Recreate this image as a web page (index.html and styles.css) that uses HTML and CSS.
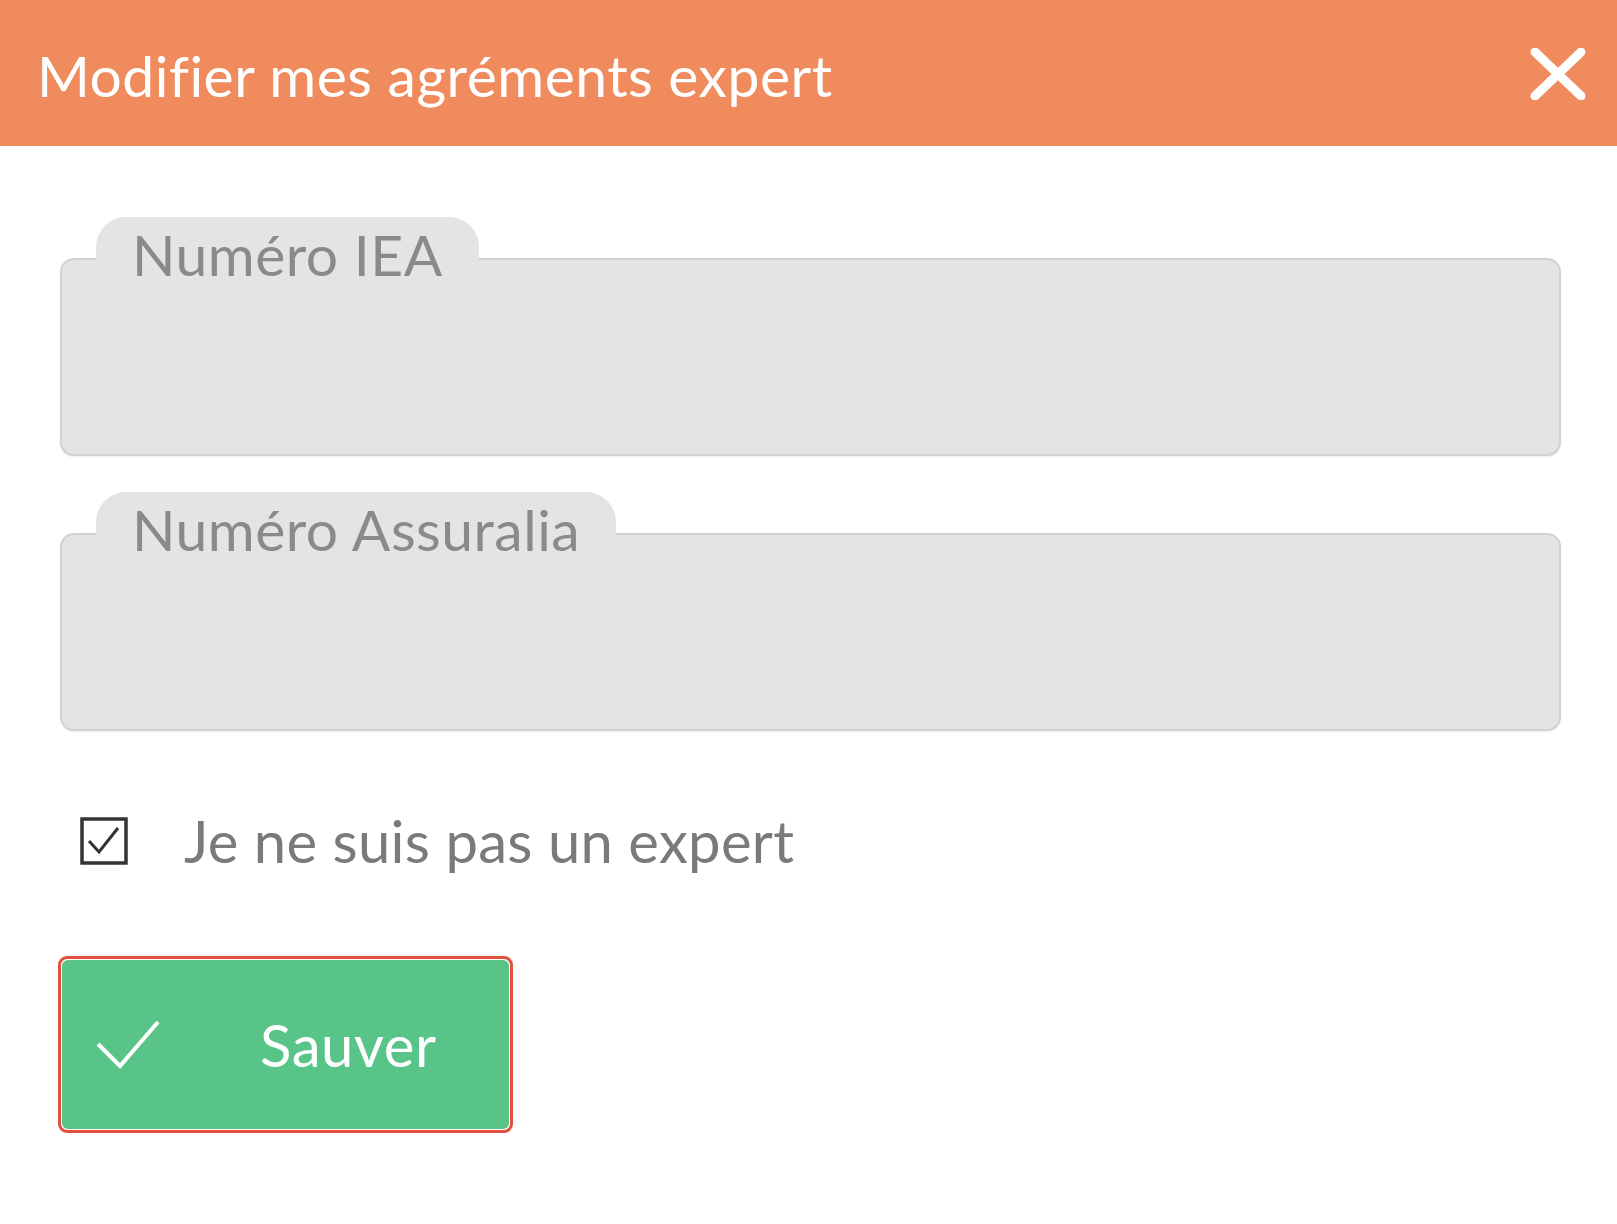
FILE: index.html
```html
<!DOCTYPE html>
<html lang="fr">
<head>
<meta charset="utf-8">
<title>Modifier mes agréments expert</title>
<link rel="stylesheet" href="styles.css">
</head>
<body>
<div class="dialog">
  <header class="dialog-header">
    <h1 class="dialog-title">Modifier mes agréments expert</h1>
    <button class="close-btn" aria-label="Fermer">
      <svg width="56" height="52" viewBox="0 0 56 52"><path d="M5 4 L51 48 M51 4 L5 48" stroke="#fff" stroke-width="9" stroke-linecap="round" fill="none"/></svg>
    </button>
  </header>
  <main class="dialog-body">
    <div class="field">
      <div class="field-tab"><span class="field-label">Numéro IEA</span></div>
      <div class="field-box"></div>
    </div>
    <div class="field field-second">
      <div class="field-tab"><span class="field-label">Numéro Assuralia</span></div>
      <div class="field-box"></div>
    </div>
    <label class="check-row">
      <span class="check-box">
        <svg width="48" height="48" viewBox="0 0 48 48"><rect x="2" y="2" width="44" height="44" fill="#fff" stroke="#333" stroke-width="3.5"/><path d="M9 24 L19 35 L38 11" stroke="#333" stroke-width="3" fill="none"/></svg>
      </span>
      <span class="check-label">Je ne suis pas un expert</span>
    </label>
    <div class="btn-ring">
      <button class="save-btn">
        <svg class="save-icon" width="64" height="50" viewBox="0 0 64 50"><path d="M2 24 L24 46 L62 2" stroke="#fff" stroke-width="4" fill="none"/></svg>
        <span class="save-text">Sauver</span>
      </button>
    </div>
  </main>
</div>
</body>
</html>
```
FILE: styles.css
```css
html, body {
  margin: 0;
  padding: 0;
  background: #fff;
}
body {
  font-family: Lato, "Open Sans", "Liberation Sans", sans-serif;
}
.dialog-header {
  height: 146px;
  background: #f08b5e;
  display: flex;
  align-items: center;
  justify-content: space-between;
  padding: 0 31px 0 37px;
  box-sizing: border-box;
}
.dialog-title {
  margin: 0;
  font-size: 57px;
  font-weight: 400;
  color: #fff;
  letter-spacing: 0.5px;
  line-height: 1;
  padding-top: 4px;
}
.close-btn {
  border: 0;
  background: none;
  padding: 0;
  display: flex;
  margin-top: 2px;
}
.dialog-body {
  padding: 71px 56px 0 60px;
  display: flex;
  flex-direction: column;
  align-items: flex-start;
}
.field {
  width: 100%;
  display: flex;
  flex-direction: column;
  align-items: flex-start;
}
.field-second {
  margin-top: 36px;
}
.field-tab {
  position: relative;
  z-index: 1;
  margin-left: 36px;
  height: 43px;
  padding: 0 36px 0 36px;
  background: #e4e4e4;
  border-radius: 30px 30px 0 0;
}
.field-label {
  display: block;
  font-size: 57px;
  line-height: 1;
  padding-top: 9px;
  color: #8a8a8a;
  letter-spacing: 0.5px;
  white-space: nowrap;
}
.field-box {
  width: 100%;
  height: 198px;
  margin-top: -2px;
  box-sizing: border-box;
  background: #e4e4e4;
  border: 2px solid #d2d2d2;
  border-radius: 14px;
  box-shadow: 0 1px 2px rgba(0,0,0,0.08);
}
.check-row {
  margin-top: 81px;
  margin-left: 20px;
  display: flex;
  align-items: center;
  gap: 56px;
}
.check-box {
  display: flex;
}
.check-label {
  font-size: 58px;
  color: #7a7a7a;
  line-height: 1;
  letter-spacing: 0.3px;
}
.btn-ring {
  margin-top: 86px;
  margin-left: -2px;
  border: 3px solid #e0503c;
  border-radius: 9px;
  padding: 1px;
  background: #fff;
}
.save-btn {
  width: 447px;
  height: 169px;
  border: 0;
  border-radius: 6px;
  background: #58c487;
  display: flex;
  align-items: center;
  padding: 0 0 0 34px;
  box-sizing: border-box;
  font-family: inherit;
}
.save-icon {
  flex: none;
}
.save-text {
  margin-left: 100px;
  font-size: 58px;
  color: #fff;
  line-height: 1;
  letter-spacing: 0.6px;
}
```
